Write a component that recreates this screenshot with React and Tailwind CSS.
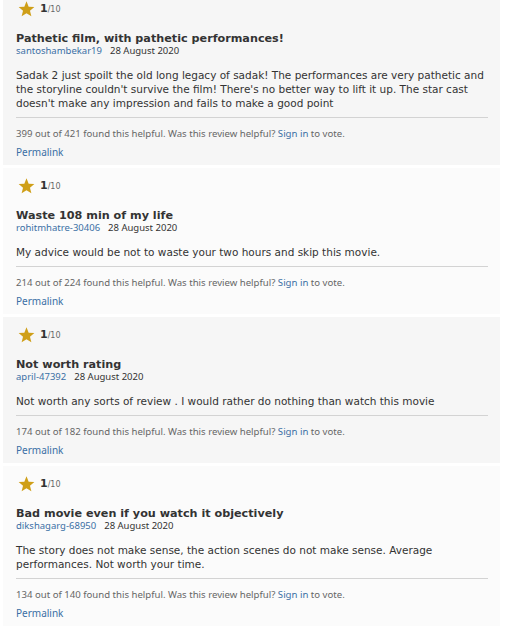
const reviews = [
  {
    title: 'Pathetic film, with pathetic performances!',
    author: 'santoshambekar19',
    date: '28 August 2020',
    body: "Sadak 2 just spoilt the old long legacy of sadak! The performances are very pathetic and the storyline couldn't survive the film! There's no better way to lift it up. The star cast doesn't make any impression and fails to make a good point",
    helpful: '399 out of 421',
  },
  {
    title: 'Waste 108 min of my life',
    author: 'rohitmhatre-30406',
    date: '28 August 2020',
    body: 'My advice would be not to waste your two hours and skip this movie.',
    helpful: '214 out of 224',
  },
  {
    title: 'Not worth rating',
    author: 'april-47392',
    date: '28 August 2020',
    body: 'Not worth any sorts of review . I would rather do nothing than watch this movie',
    helpful: '174 out of 182',
  },
  {
    title: 'Bad movie even if you watch it objectively',
    author: 'dikshagarg-68950',
    date: '28 August 2020',
    body: 'The story does not make sense, the action scenes do not make sense. Average performances. Not worth your time.',
    helpful: '134 out of 140',
  },
];

const Star = () => (
  <svg width="17" height="16" viewBox="0 0 24 23" className="block">
    <path
      d="M12 0.5l3.1 7.6 8.2.6-6.3 5.3 2 8-7-4.4-7 4.4 2-8L.7 8.7l8.2-.6z"
      fill="#cf9f18"
    />
  </svg>
);

const ReviewCard = ({ review, odd }) => (
  <div className={`${odd ? 'bg-[#f6f6f6]' : 'bg-[#fbfbfb]'} pl-[13px] pr-[12px] pt-[10px] pb-[7px]`}>
    <div className="flex items-center gap-[5px] pl-[2px] h-[16px]">
      <Star />
      <span className="text-[11px] font-bold text-[#333]">
        1<span className="text-[8px] font-normal text-[#666]">/10</span>
      </span>
    </div>
    <div className="mt-[15px] text-[11.2px] leading-[13px] font-bold text-[#333]">{review.title}</div>
    <div className="text-[9.5px] leading-[11px] font-['Noto_Sans',sans-serif]">
      <a className="text-[#3a6fa5]">{review.author}</a>
      <span className="ml-[8px] text-[#333]">{review.date}</span>
    </div>
    <p className="mt-[12px] text-[10.5px] leading-[14px] text-[#333]">{review.body}</p>
    <div className="mt-[7px] border-t border-[#d3d3d3]" />
    <div className="mt-[10px] text-[9.6px] leading-[12px] text-[#666] font-['Noto_Sans',sans-serif]">
      {review.helpful} found this helpful. Was this review helpful?{' '}
      <a className="text-[#3a6fa5]">Sign in</a> to vote.
    </div>
    <div className="mt-[6px] text-[10px] leading-[12px] font-['Noto_Sans',sans-serif]">
      <a className="text-[#3a6fa5]">Permalink</a>
    </div>
  </div>
);

export default function App() {
  return (
    <div className="w-[506px] h-[629px] bg-white overflow-hidden font-['DejaVu_Sans',Verdana,sans-serif]">
      <div className="ml-[3px] -mt-[9px] w-[497px] flex flex-col gap-[3px]">
        {reviews.map((r, i) => (
          <ReviewCard key={i} review={r} odd={i % 2 === 0} />
        ))}
      </div>
    </div>
  );
}
